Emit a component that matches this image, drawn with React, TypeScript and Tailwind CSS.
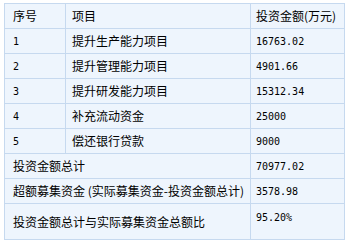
const rows = [
  { no: "1", name: "提升生产能力项目", amount: "16763.02" },
  { no: "2", name: "提升管理能力项目", amount: "4901.66" },
  { no: "3", name: "提升研发能力项目", amount: "15312.34" },
  { no: "4", name: "补充流动资金", amount: "25000" },
  { no: "5", name: "偿还银行贷款", amount: "9000" },
];

const cell = "flex items-center border-r border-b border-[#c6d9ef] h-[25px] whitespace-nowrap";
const cjk = { fontFamily: '"Noto Sans CJK SC", sans-serif' };
const num = { fontFamily: '"DejaVu Sans Mono", "Liberation Mono", monospace' };

export default function App() {
  return (
    <div className="w-[348px] h-[246px] bg-white pt-[3px] pl-[4px] text-black text-[12px]" style={cjk}>
      <div className="w-[341px] grid grid-cols-[61px_185px_94px] border-l border-t border-[#c6d9ef] bg-[#eef5fd]">
        {/* header */}
        <div className={`${cell} pl-[8px]`}>序号</div>
        <div className={`${cell} pl-[6px]`}>项目</div>
        <div className={`${cell} pl-[5px]`}>投资金额(万元)</div>

        {rows.map((r) => (
          <div key={r.no} className="contents">
            <div className={`${cell} pl-[8px] text-[10px]`} style={num}>{r.no}</div>
            <div className={`${cell} pl-[6px]`}>{r.name}</div>
            <div className={`${cell} pl-[5px] text-[10px]`} style={num}>{r.amount}</div>
          </div>
        ))}

        <div className={`${cell} col-span-2 pl-[8px]`}>投资金额总计</div>
        <div className={`${cell} pl-[5px] text-[10px]`} style={num}>70977.02</div>

        <div className={`${cell} col-span-2 pl-[8px]`}>超额募集资金 (实际募集资金-投资金额总计)</div>
        <div className={`${cell} pl-[5px] text-[10px]`} style={num}>3578.98</div>

        <div className="col-span-2 flex items-center h-[36px] pl-[8px] pt-[1px] border-r border-b border-[#c6d9ef] whitespace-nowrap">
          投资金额总计与实际募集资金总额比
        </div>
        <div className="h-[36px] pl-[5px] pt-[9px] border-r border-b border-[#c6d9ef] text-[10px] leading-none" style={num}>
          95.20%
        </div>
      </div>
    </div>
  );
}
